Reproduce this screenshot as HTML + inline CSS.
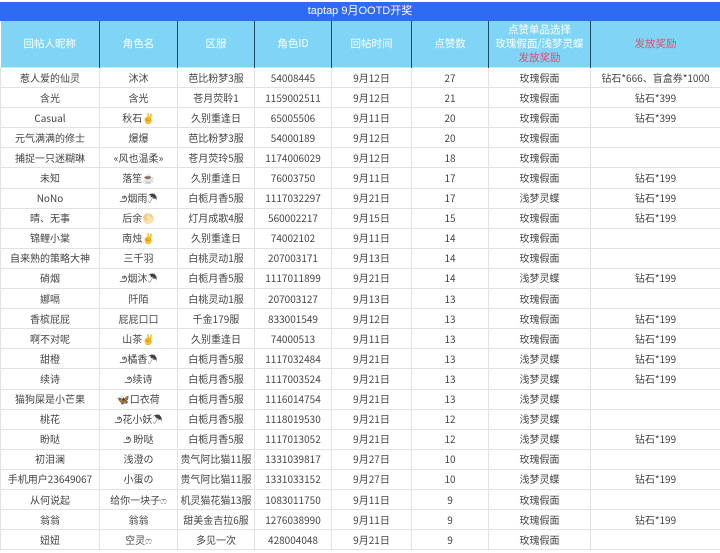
<!DOCTYPE html>
<html><head><meta charset="utf-8"><style>
body{margin:0;width:720px;height:553px;overflow:hidden;background:#fff;font-family:"Liberation Sans","Noto Sans CJK SC",sans-serif;}
.t{position:absolute;left:0;top:2px;width:720px;height:19px;background:#2f6af2;color:#fff;font-size:11px;line-height:19px;text-align:center;}
table{position:absolute;left:0;top:21px;border-collapse:collapse;table-layout:fixed;width:720px;font-size:10px;color:#444;font-family:"Noto Sans CJK SC",sans-serif;}
th{background:#80d4f6;color:#fff;font-weight:normal;height:46px;border-left:1px solid #1d4a66;border-right:1px solid #1d4a66;font-size:10.5px;line-height:14px;padding:0}
th:first-child{border-left:none}
td{height:19.1px;line-height:16px;vertical-align:middle;padding:0;text-align:center;border:1px solid #e2e2e2;white-space:nowrap;overflow:hidden;}
.r{color:#e0506a}
</style></head><body>
<div class="t">taptap 9月OOTD开奖</div>
<table>
<colgroup><col style="width:99px"><col style="width:78px"><col style="width:77px"><col style="width:77px"><col style="width:80px"><col style="width:77px"><col style="width:102px"><col style="width:130px"></colgroup>
<tr><th>回帖人昵称</th><th>角色名</th><th>区服</th><th>角色ID</th><th>回帖时间</th><th>点赞数</th><th>点赞单品选择<br>玫瑰假面/浅梦灵蝶<br><span class="r">发放奖励</span></th><th><span class="r">发放奖励</span></th></tr>
<tr><td>惹人爱的仙灵</td><td>沐沐</td><td>芭比粉梦3服</td><td>54008445</td><td>9月12日</td><td>27</td><td>玫瑰假面</td><td>钻石*666、盲盒券*1000</td></tr>
<tr><td>含光</td><td>含光</td><td>苍月荧聆1</td><td>1159002511</td><td>9月12日</td><td>21</td><td>玫瑰假面</td><td>钻石*399</td></tr>
<tr><td>Casual</td><td>秋石✌</td><td>久别重逢日</td><td>65005506</td><td>9月11日</td><td>20</td><td>玫瑰假面</td><td>钻石*399</td></tr>
<tr><td>元气满满的修士</td><td>爆爆</td><td>芭比粉梦3服</td><td>54000189</td><td>9月12日</td><td>20</td><td>玫瑰假面</td><td></td></tr>
<tr><td>捕捉一只迷糊琳</td><td>«风也温柔»</td><td>苍月荧玲5服</td><td>1174006029</td><td>9月12日</td><td>18</td><td>玫瑰假面</td><td></td></tr>
<tr><td>未知</td><td>落笙☕</td><td>久别重逢日</td><td>76003750</td><td>9月11日</td><td>17</td><td>玫瑰假面</td><td>钻石*199</td></tr>
<tr><td>NoNo</td><td>౨烟雨☂</td><td>白栀月香5服</td><td>1117032297</td><td>9月21日</td><td>17</td><td>浅梦灵蝶</td><td>钻石*199</td></tr>
<tr><td>晴、无事</td><td>后余🌕</td><td>灯月成歌4服</td><td>560002217</td><td>9月15日</td><td>15</td><td>玫瑰假面</td><td>钻石*199</td></tr>
<tr><td>锦鲤小棠</td><td>南烛✌</td><td>久别重逢日</td><td>74002102</td><td>9月11日</td><td>14</td><td>玫瑰假面</td><td></td></tr>
<tr><td>自来熟的策略大神</td><td>三千羽</td><td>白桃灵动1服</td><td>207003171</td><td>9月13日</td><td>14</td><td>玫瑰假面</td><td></td></tr>
<tr><td>硝烟</td><td>౨烟沐☂</td><td>白栀月香5服</td><td>1117011899</td><td>9月21日</td><td>14</td><td>浅梦灵蝶</td><td>钻石*199</td></tr>
<tr><td>娜嗝</td><td>阡陌</td><td>白桃灵动1服</td><td>207003127</td><td>9月13日</td><td>13</td><td>玫瑰假面</td><td></td></tr>
<tr><td>香槟屁屁</td><td>屁屁口口</td><td>千金179服</td><td>833001549</td><td>9月12日</td><td>13</td><td>玫瑰假面</td><td>钻石*199</td></tr>
<tr><td>啊不对呢</td><td>山茶✌</td><td>久别重逢日</td><td>74000513</td><td>9月11日</td><td>13</td><td>玫瑰假面</td><td>钻石*199</td></tr>
<tr><td>甜橙</td><td>౨橘香☂</td><td>白栀月香5服</td><td>1117032484</td><td>9月21日</td><td>13</td><td>浅梦灵蝶</td><td>钻石*199</td></tr>
<tr><td>续诗</td><td>౨续诗</td><td>白栀月香5服</td><td>1117003524</td><td>9月21日</td><td>13</td><td>浅梦灵蝶</td><td>钻石*199</td></tr>
<tr><td>猫狗屎是小芒果</td><td>🦋口衣荷</td><td>白栀月香5服</td><td>1116014754</td><td>9月21日</td><td>13</td><td>浅梦灵蝶</td><td></td></tr>
<tr><td>桃花</td><td>౨花小妖☂</td><td>白栀月香5服</td><td>1118019530</td><td>9月21日</td><td>12</td><td>浅梦灵蝶</td><td></td></tr>
<tr><td>盼哒</td><td>౨ 盼哒</td><td>白栀月香5服</td><td>1117013052</td><td>9月21日</td><td>12</td><td>浅梦灵蝶</td><td>钻石*199</td></tr>
<tr><td>初泪澜</td><td>浅澄の</td><td>贵气阿比猫11服</td><td>1331039817</td><td>9月27日</td><td>10</td><td>玫瑰假面</td><td></td></tr>
<tr><td>手机用户23649067</td><td>小蛋の</td><td>贵气阿比猫11服</td><td>1331033152</td><td>9月27日</td><td>10</td><td>浅梦灵蝶</td><td>钻石*199</td></tr>
<tr><td>从何说起</td><td>给你一块子ෆ</td><td>机灵猫花猫13服</td><td>1083011750</td><td>9月11日</td><td>9</td><td>玫瑰假面</td><td></td></tr>
<tr><td>翁翁</td><td>翁翁</td><td>甜美金吉拉6服</td><td>1276038990</td><td>9月11日</td><td>9</td><td>玫瑰假面</td><td>钻石*199</td></tr>
<tr><td>妞妞</td><td>空灵ෆ</td><td>多见一次</td><td>428004048</td><td>9月21日</td><td>9</td><td>玫瑰假面</td><td></td></tr>
</table>
</body></html>
